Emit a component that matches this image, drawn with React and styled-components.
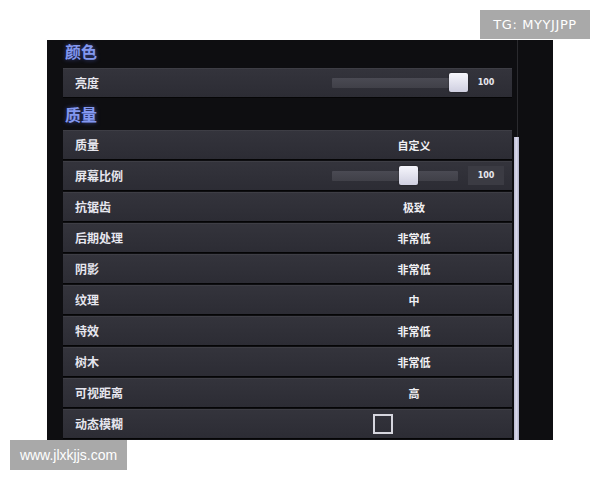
import React from "react";
import styled, { createGlobalStyle } from "styled-components";

const Global = createGlobalStyle`
  html, body {
    margin: 0;
    padding: 0;
    background: #ffffff;
  }
  * {
    box-sizing: border-box;
  }
`;

const Page = styled.div`
  width: 600px;
  height: 480px;
  padding-top: 10px;
  display: flex;
  flex-direction: column;
  overflow: hidden;
`;

const TopMark = styled.div`
  align-self: flex-end;
  margin-right: 10px;
  width: 110px;
  height: 29px;
  margin-bottom: 1px;
  background: #a9a9a9;
  color: #ffffff;
  font-family: "DejaVu Sans", "Liberation Sans", sans-serif;
  font-size: 13px;
  letter-spacing: 0.6px;
  display: flex;
  align-items: center;
  justify-content: center;
`;

const BottomMark = styled.div`
  margin-left: 10px;
  width: 117px;
  height: 30px;
  background: #a9a9a9;
  color: #ffffff;
  font-family: "Liberation Sans", Arial, sans-serif;
  font-size: 14px;
  display: flex;
  align-items: center;
  justify-content: center;
`;

const Panel = styled.div`
  margin-left: 47px;
  width: 506px;
  height: 400px;
  background: #0e0e11;
  display: flex;
  padding-left: 16px;
  padding-right: 34px;
  overflow: hidden;
`;

const Content = styled.div`
  width: 449px;
  display: flex;
  flex-direction: column;
  font-family: "Noto Sans CJK SC", "Noto Sans", sans-serif;
`;

const Scrollbar = styled.div`
  margin-left: 2px;
  width: 5px;
  display: flex;
  flex-direction: column;
`;

const ScrollTrack = styled.div`
  height: 97px;
  width: 1px;
  margin-left: 3px;
  background: #2a2a2e;
`;

const ScrollThumb = styled.div`
  flex: 1;
  background: linear-gradient(90deg, #b8b8d0, #d8d8ea 50%, #b0b0c8);
`;

const Heading = styled.div`
  padding: ${(p) => p.$pt}px 0 ${(p) => p.$pb}px 2px;
  line-height: 22px;
  font-size: 16px;
  font-weight: 700;
  color: #8398f0;
  text-shadow: 0 0 4px rgba(90, 110, 230, 0.6);
`;

const List = styled.div`
  display: flex;
  flex-direction: column;
  gap: 2px;
`;

const Row = styled.div`
  height: 29px;
  flex-shrink: 0;
  display: grid;
  grid-template-columns: 269px 164px 1fr;
  align-items: center;
  background: linear-gradient(180deg, #34343c, #2c2c34);
  box-shadow: inset 0 1px 0 rgba(255, 255, 255, 0.05),
    0 1px 0 rgba(0, 0, 0, 0.6);
`;

const Label = styled.div`
  padding-left: 12px;
  font-size: 12px;
  font-weight: 600;
  color: #e6e6ee;
`;

const Value = styled.div`
  text-align: center;
  font-size: 11px;
  font-weight: 700;
  color: #f0f0f4;
`;

const SliderWrap = styled.div`
  grid-column: 2 / 4;
  display: flex;
  align-items: center;
  gap: 10px;
`;

const Track = styled.div`
  position: relative;
  width: 126px;
  height: 10px;
  background: linear-gradient(180deg, #4a4a53, #404048);
  border-radius: 1px;
`;

const Thumb = styled.div`
  position: absolute;
  top: -5px;
  width: 19px;
  height: 19px;
  margin-left: -9px;
  border-radius: 2px;
  background: linear-gradient(180deg, #f6f6fc, #cfcfe0);
  box-shadow: 0 0 2px rgba(0, 0, 0, 0.5);
`;

const NumBox = styled.div`
  width: 36px;
  height: 19px;
  display: flex;
  align-items: center;
  justify-content: center;
  background: ${(p) => (p.$boxed ? "#3b3b43" : "transparent")};
  color: #e8e8ee;
  font-family: "DejaVu Sans", sans-serif;
  font-size: 8px;
  font-weight: 700;
`;

const Check = styled.div`
  margin-left: 41px;
  width: 20px;
  height: 20px;
  border: 2px solid #d6d6de;
`;

const Slider = ({ ratio, value, boxed }) => (
  <SliderWrap>
    <Track>
      <Thumb style={{ left: `${ratio * 100}%` }} />
    </Track>
    <NumBox $boxed={boxed}>{value}</NumBox>
  </SliderWrap>
);

const quality = [
  { label: "质量", value: "自定义" },
  { label: "屏幕比例", slider: 0.6 },
  { label: "抗锯齿", value: "极致" },
  { label: "后期处理", value: "非常低" },
  { label: "阴影", value: "非常低" },
  { label: "纹理", value: "中" },
  { label: "特效", value: "非常低" },
  { label: "树木", value: "非常低" },
  { label: "可视距离", value: "高" },
  { label: "动态模糊", check: true },
];

export default function App() {
  return (
    <Page>
      <Global />
      <TopMark>TG: MYYJJPP</TopMark>
      <Panel>
        <Content>
          <Heading $pt={0} $pb={6}>颜色</Heading>
          <Row>
            <Label>亮度</Label>
            <Slider ratio={1} value="100" />
          </Row>
          <Heading $pt={6} $pb={5}>质量</Heading>
          <List>
            {quality.map((item) => (
              <Row key={item.label}>
                <Label>{item.label}</Label>
                {item.slider !== undefined && (
                  <Slider ratio={item.slider} value="100" boxed />
                )}
                {item.value && <Value>{item.value}</Value>}
                {item.check && <Check />}
              </Row>
            ))}
          </List>
        </Content>
        <Scrollbar>
          <ScrollTrack />
          <ScrollThumb />
        </Scrollbar>
      </Panel>
      <BottomMark>www.jlxkjjs.com</BottomMark>
    </Page>
  );
}
